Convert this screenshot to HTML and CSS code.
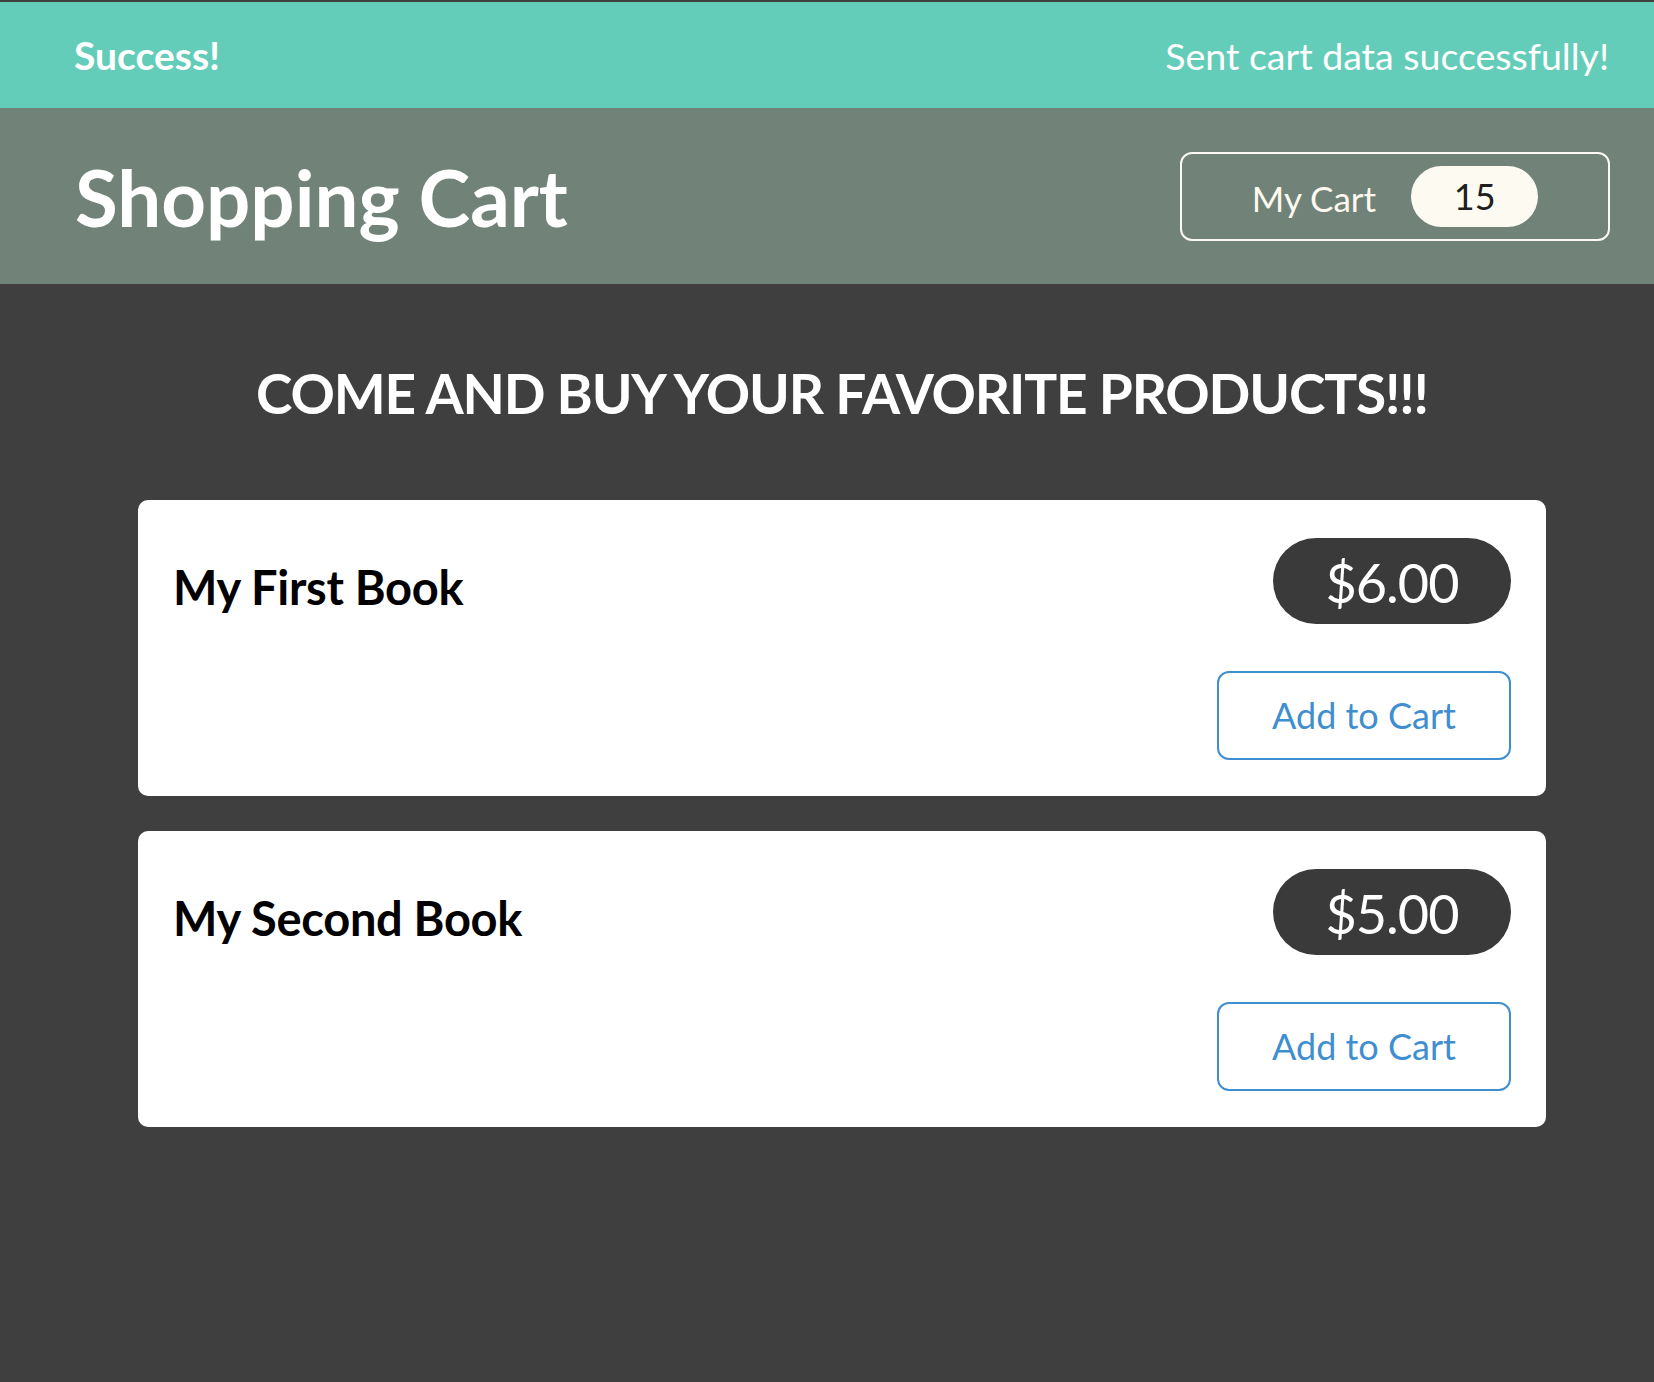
FILE: index.html
```html
<!DOCTYPE html>
<html lang="en">
<head>
<meta charset="utf-8">
<title>Shopping Cart</title>
<link rel="stylesheet" href="styles.css">
</head>
<body>
  <section class="notification">
    <h2 class="notification-title">Success!</h2>
    <p class="notification-message">Sent cart data successfully!</p>
  </section>
  <header class="header">
    <h1 class="header-title">Shopping Cart</h1>
    <button class="cart-button">
      <span class="cart-label">My Cart</span>
      <span class="cart-badge">15</span>
    </button>
  </header>
  <main class="main">
    <h2 class="products-title">COME AND BUY YOUR FAVORITE PRODUCTS!!!</h2>
    <ul class="product-list">
      <li class="product-card">
        <div class="product-top">
          <h3 class="product-name">My First Book</h3>
          <div class="product-price">$6.00</div>
        </div>
        <div class="product-actions">
          <button class="add-button">Add to Cart</button>
        </div>
      </li>
      <li class="product-card">
        <div class="product-top">
          <h3 class="product-name">My Second Book</h3>
          <div class="product-price">$5.00</div>
        </div>
        <div class="product-actions">
          <button class="add-button">Add to Cart</button>
        </div>
      </li>
    </ul>
  </main>
</body>
</html>
```
FILE: styles.css
```css
* {
  box-sizing: border-box;
}

html, body {
  margin: 0;
  padding: 0;
}

body {
  background: #3f3f3f;
  font-family: "Lato", "Noto Sans", sans-serif;
  padding-top: 2px;
  min-height: 1382px;
}

.notification {
  background: #64cdb9;
  height: 106px;
  display: flex;
  align-items: center;
  justify-content: space-between;
  padding: 0 45px 0 74px;
  color: #ffffff;
}

.notification-title {
  margin: 0;
  font-size: 39px;
  font-weight: 700;
  line-height: 1.2;
}

.notification-message {
  margin: 0;
  font-size: 37.5px;
  font-weight: 400;
  line-height: 1.2;
}

.header {
  background: #718378;
  height: 176px;
  display: flex;
  align-items: center;
  justify-content: space-between;
  padding: 0 44px 0 75px;
}

.header-title {
  margin: 0;
  padding-top: 4px;
  font-size: 78px;
  font-weight: 700;
  line-height: 1.2;
  color: #ffffff;
}

.cart-button {
  width: 430px;
  height: 89px;
  border: 2px solid #fbfaf5;
  border-radius: 12px;
  background: transparent;
  display: flex;
  align-items: center;
  justify-content: center;
  gap: 35px;
  padding: 0;
  font-family: inherit;
}

.cart-label {
  font-size: 35px;
  color: #fdf9ef;
  line-height: 1.2;
  padding-top: 3px;
}

.cart-badge {
  width: 127px;
  height: 61px;
  border-radius: 31px;
  background: #fdfaf2;
  color: #1f1f1f;
  font-size: 36px;
  line-height: 61px;
  text-align: center;
}

.main {
  padding: 76px 108px 0 138px;
}

.products-title {
  margin: 0;
  text-align: center;
  color: #ffffff;
  font-size: 55px;
  font-weight: 700;
  letter-spacing: -1.15px;
  line-height: 1.2;
}

.product-list {
  list-style: none;
  margin: 74px 0 0;
  padding: 0;
  display: flex;
  flex-direction: column;
  gap: 35px;
}

.product-card {
  background: #ffffff;
  border-radius: 10px;
  padding: 38px 35px 36px 35px;
}

.product-top {
  display: flex;
  justify-content: space-between;
  align-items: flex-start;
}

.product-name {
  margin: 0;
  padding-top: 21px;
  font-size: 47px;
  font-weight: 700;
  letter-spacing: -0.3px;
  line-height: 1.2;
  color: #000000;
}

.product-price {
  width: 238px;
  height: 86px;
  border-radius: 43px;
  background: #3a3a3a;
  color: #ffffff;
  font-size: 54px;
  letter-spacing: -1px;
  line-height: 90px;
  text-align: center;
}

.product-actions {
  display: flex;
  justify-content: flex-end;
  margin-top: 47px;
}

.add-button {
  width: 294px;
  height: 89px;
  border: 2px solid #3f8fd0;
  border-radius: 12px;
  background: #ffffff;
  color: #3f8fd0;
  font-family: inherit;
  font-size: 36px;
  line-height: 1.2;
  padding: 0 0 0 0;
}
```
